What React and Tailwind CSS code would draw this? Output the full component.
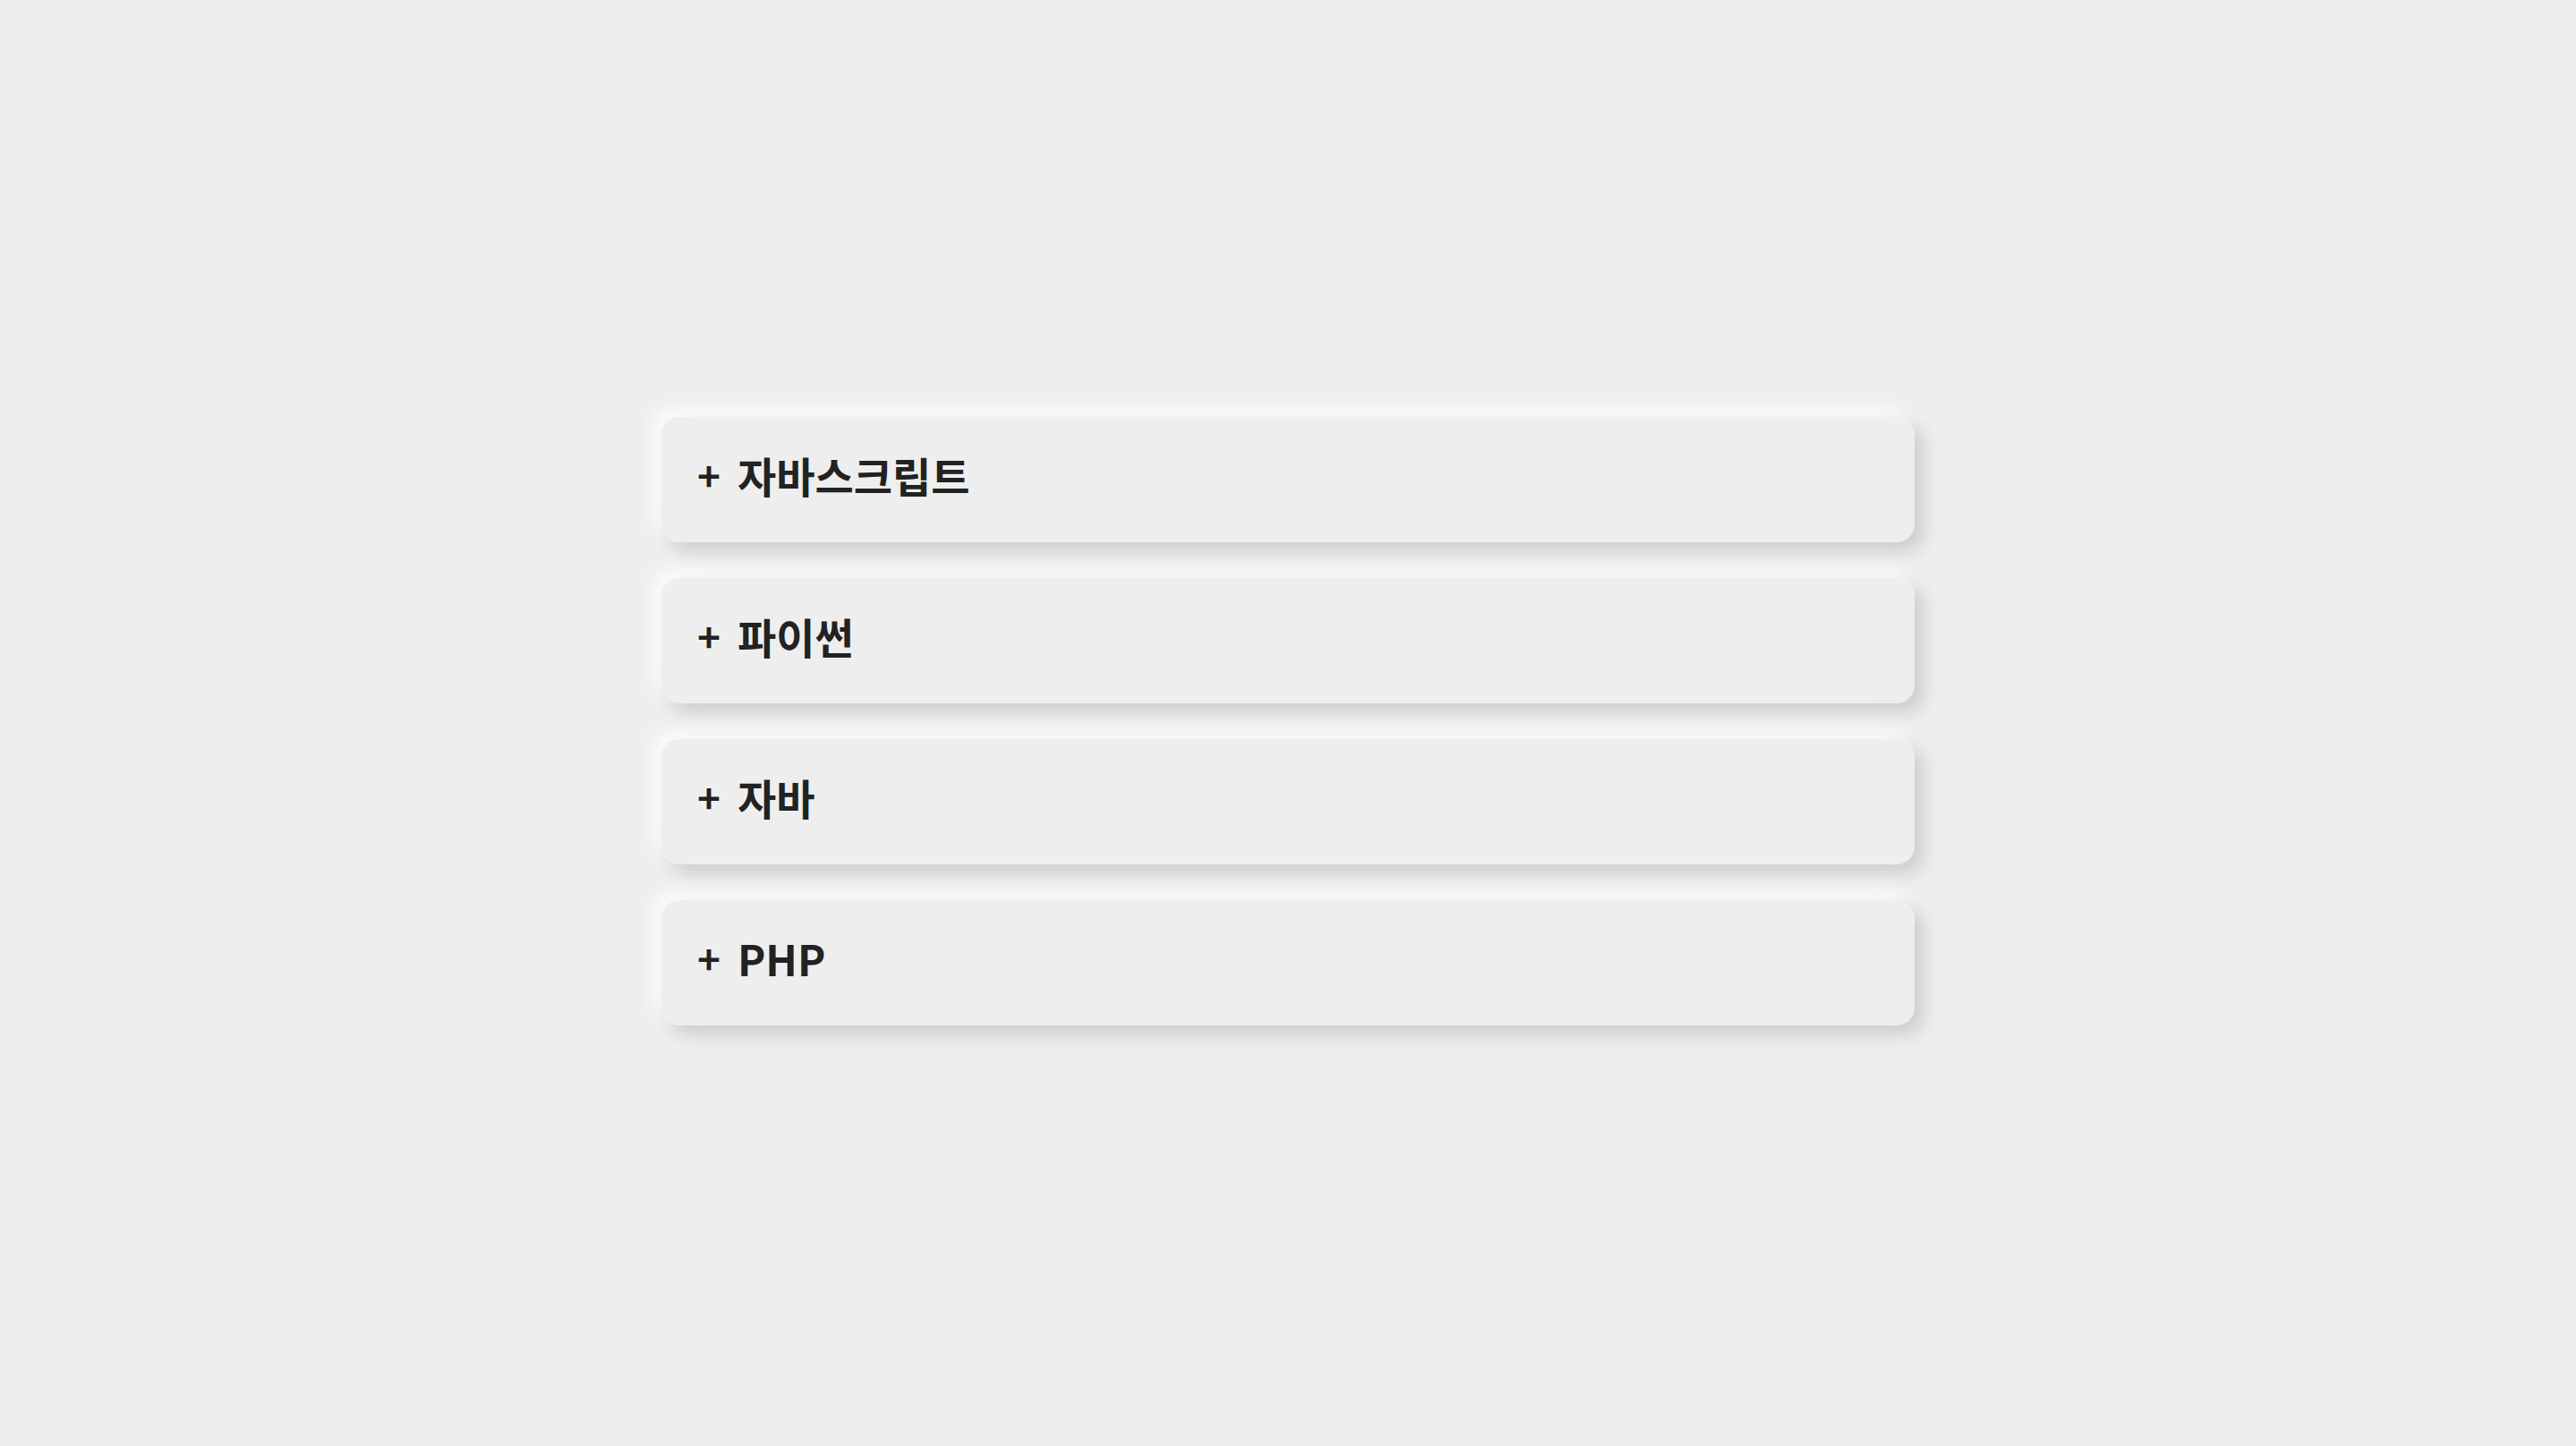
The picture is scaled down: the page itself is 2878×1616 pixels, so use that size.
import { useState } from 'react'

const items = ['자바스크립트', '파이썬', '자바', 'PHP']

export default function App() {
  const [open, setOpen] = useState(null)

  return (
    <div className="min-h-screen bg-[#eeeeee] flex items-center justify-center font-['Noto_Sans_CJK_KR',sans-serif]">
      <div className="w-[1400px] flex flex-col gap-10 -mt-[4px]">
        {items.map((item, i) => (
          <button
            key={item}
            onClick={() => setOpen(open === i ? null : i)}
            className="h-[140px] w-full rounded-[20px] bg-[#eeeeee] flex items-center gap-[19px] pl-[40px] text-left font-bold text-[#222222] shadow-[10px_10px_20px_rgba(0,0,0,0.14),-10px_-10px_20px_rgba(255,255,255,0.8)]"
          >
            <span className="text-[44px] leading-none -mt-[12px]">{open === i ? '-' : '+'}</span>
            <span className="text-[47px] leading-none -mt-[12px]">{item}</span>
          </button>
        ))}
      </div>
    </div>
  )
}
